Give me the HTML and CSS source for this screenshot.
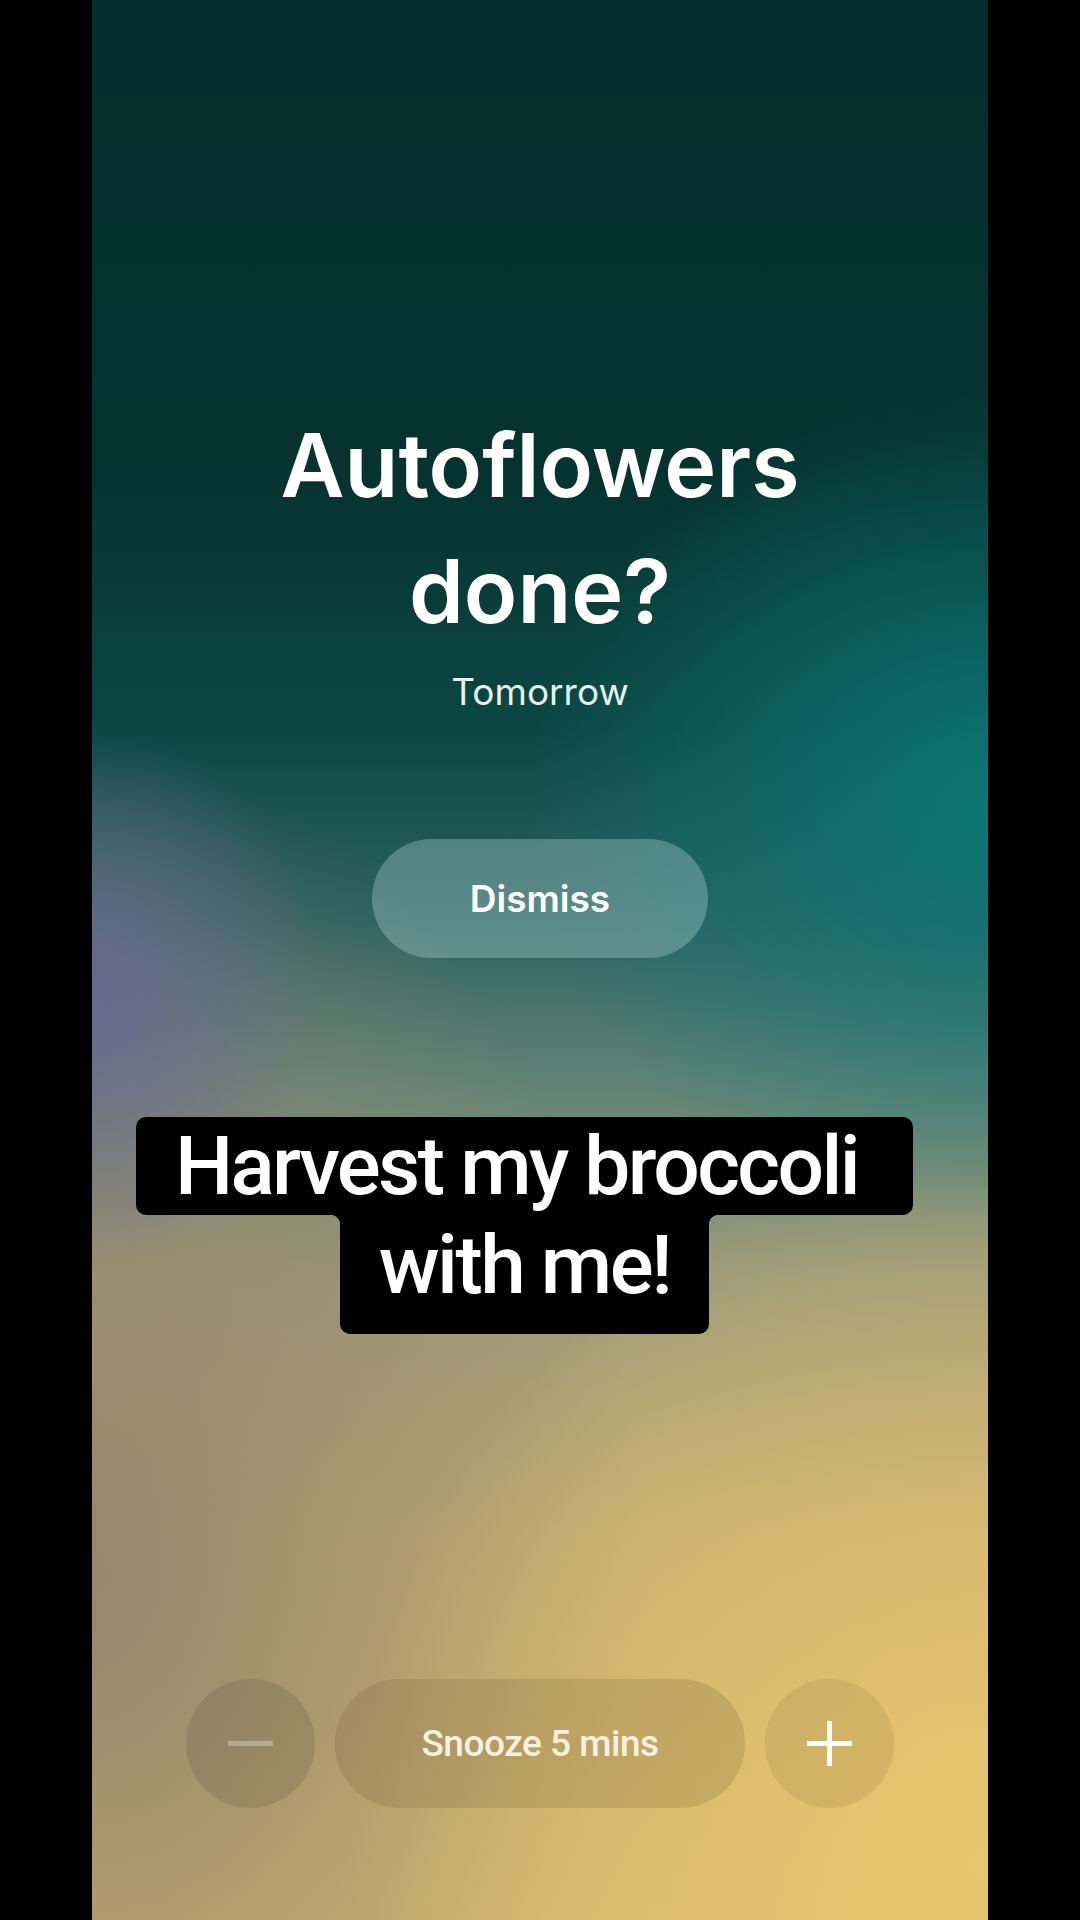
FILE: index.html
```html
<!DOCTYPE html>
<html>
<head>
    <meta charset="UTF-8">
    <meta name="viewport" content="width=device-width, initial-scale=1.0">
    <title>Alarm</title>
    <link rel="stylesheet" href="styles.css">
</head>
<body>
    <div class="screen">
        <h1 class="title">Autoflowers<br>done?</h1>
        <div class="when">Tomorrow</div>
        <button class="dismiss">Dismiss</button>

        <div class="caption">
            <span class="line line-one">Harvest my broccoli</span>
            <span class="line line-two">with me!</span>
        </div>

        <div class="snooze-row">
            <button class="round minus" aria-label="Less"><span class="bar"></span></button>
            <button class="snooze">Snooze 5 mins</button>
            <button class="round plus" aria-label="More"><span class="bar"></span><span class="bar upright"></span></button>
        </div>
    </div>
</body>
</html>
```

FILE: styles.css
```css
html, body {
    margin: 0;
    padding: 0;
    background-color: #000;
}
body {
    font-family: Inter, "Open Sans", sans-serif;
    color: #fff;
}
.screen {
    width: 896px;
    height: 1920px;
    margin: 0 auto;
    display: flex;
    flex-direction: column;
    align-items: center;
    overflow: hidden;
    background:
        radial-gradient(ellipse 460px 420px at 100% 42%, rgba(12, 120, 120, 0.95), rgba(12, 120, 120, 0) 100%),
        radial-gradient(ellipse 230px 270px at 0% 52%, rgba(104, 106, 146, 0.95), rgba(104, 106, 146, 0) 100%),
        radial-gradient(ellipse 640px 700px at 100% 97%, rgba(232, 198, 110, 1), rgba(232, 198, 110, 0) 100%),
        radial-gradient(ellipse 560px 820px at 0% 82%, rgba(150, 134, 108, 1), rgba(150, 134, 108, 0) 100%),
        linear-gradient(180deg, #052f2c 0%, #06332f 25%, #0c4744 38%, #2f6260 48%, #5e8276 56%, #9a9a7a 66%, #c2ac72 80%, #d2b870 100%);
}
.title {
    margin: 402px 0 0;
    font-size: 88px;
    line-height: 126px;
    font-weight: 600;
    text-align: center;
}
.when {
    margin-top: 14px;
    font-size: 37px;
    line-height: 48px;
    color: #e6f2ef;
}
button {
    font-family: inherit;
    border: none;
    color: #fff;
    padding: 0;
    cursor: pointer;
}
.dismiss {
    margin-top: 123px;
    width: 336px;
    height: 119px;
    border-radius: 60px;
    background-color: rgba(190, 225, 220, 0.32);
    font-size: 37px;
    font-weight: 600;
}
.caption {
    margin-top: 159px;
    margin-right: 31px;
    display: flex;
    flex-direction: column;
    align-items: center;
    font-family: Roboto, "Liberation Sans", sans-serif;
    font-size: 82px;
    font-weight: 500;
    letter-spacing: -2.6px;
}
.line {
    display: block;
    background-color: #000;
    border-radius: 10px;
    padding: 0 39px;
    height: 98px;
    line-height: 98px;
}
.line-one {
    padding-right: 55px;
}
.line-two {
    position: relative;
    height: 119px;
    line-height: 100px;
    border-radius: 0 0 10px 10px;
}
/* concave corners where the two caption boxes meet */
.line-two::before,
.line-two::after {
    content: "";
    position: absolute;
    top: 0;
    width: 10px;
    height: 10px;
}
.line-two::before {
    left: -10px;
    background: radial-gradient(circle at 0 100%, transparent 10px, #000 10.5px);
}
.line-two::after {
    right: -10px;
    background: radial-gradient(circle at 100% 100%, transparent 10px, #000 10.5px);
}
.snooze-row {
    margin-top: 345px;
    display: flex;
    gap: 20px;
}
.round, .snooze {
    height: 129px;
    border-radius: 65px;
}
.round {
    width: 129px;
    position: relative;
    background-color: rgba(100, 88, 62, 0.24);
}
.plus {
    background-color: rgba(120, 98, 40, 0.14);
}
.snooze {
    width: 410px;
    background-color: rgba(110, 92, 52, 0.2);
    font-family: Roboto, "Liberation Sans", sans-serif;
    font-size: 37px;
    font-weight: 500;
    letter-spacing: -0.5px;
    color: #f7f1e2;
}
.bar {
    position: absolute;
    left: 42px;
    top: 62px;
    width: 45px;
    height: 5px;
    background-color: #fff;
}
.minus .bar {
    background-color: rgba(225, 215, 195, 0.45);
}
.bar.upright {
    left: 62px;
    top: 42px;
    width: 5px;
    height: 45px;
}
```
